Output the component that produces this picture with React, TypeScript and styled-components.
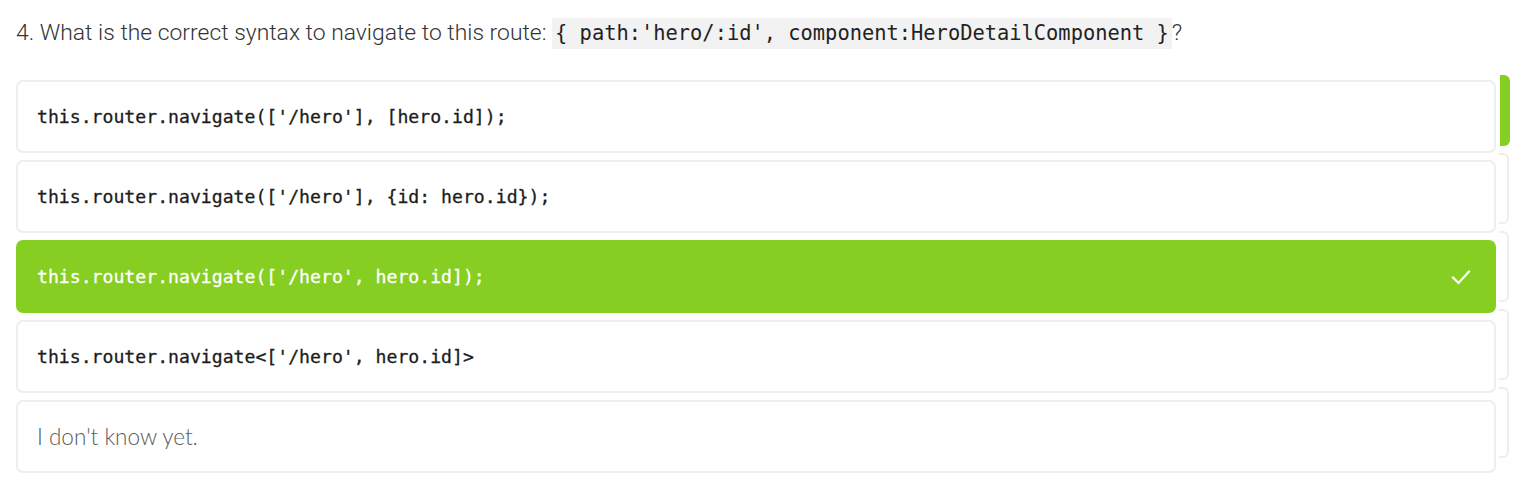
import React from "react";
import styled, { createGlobalStyle } from "styled-components";

const Global = createGlobalStyle`
  html, body { margin: 0; padding: 0; background: #ffffff; }
  body { font-family: Roboto, "Noto Sans", sans-serif; color: #2b2b2b; }
`;

const GREEN = "#86ce22";
const LINE = "#eeeeee";

const Page = styled.div`
  padding: 16px 0 0 16px;
  width: 1508px;
`;

const Question = styled.h2`
  margin: 0;
  font-family: Roboto, sans-serif;
  font-weight: 300;
  font-size: 22.9px;
  line-height: 34px;
  color: #333333;
  height: 34px;
`;

const InlineCode = styled.code`
  font-family: "DejaVu Sans Mono", monospace;
  font-size: 20.4px;
  font-weight: 400;
  background: #f2f2f2;
  color: #222;
  padding: 3px 3px 4px 3px;
`;

const Body = styled.div`
  display: flex;
  align-items: flex-start;
  gap: 4px;
  margin-top: 25px;
`;

const Options = styled.div`
  display: flex;
  flex-direction: column;
  gap: 7px;
  width: 1480px;
  padding-top: 5px;
`;

const Option = styled.div<{ $selected?: boolean }>`
  box-sizing: border-box;
  height: 73px;
  display: flex;
  align-items: center;
  justify-content: space-between;
  padding: 0 23px 0 19px;
  border: 2px solid ${(p) => (p.$selected ? GREEN : LINE)};
  background: ${(p) => (p.$selected ? GREEN : "#ffffff")};
  border-radius: 7px;
  color: ${(p) => (p.$selected ? "#ffffff" : "#1c1c1c")};
`;

const Code = styled.span`
  font-family: "DejaVu Sans Mono", monospace;
  font-size: 18.15px;
  font-weight: 400;
  -webkit-text-stroke: 0.3px currentColor;
`;

const Plain = styled.span`
  font-family: Lato, sans-serif;
  font-weight: 300;
  font-size: 22.5px;
  color: #5a5a5a;
`;

const Strip = styled.div`
  display: flex;
  flex-direction: column;
  gap: 7px;
  width: 10px;
`;

const Segment = styled.div<{ $active?: boolean }>`
  box-sizing: border-box;
  height: 71px;
  width: 10px;
  border-radius: 0 6px 6px 0;
  background: ${(p) => (p.$active ? GREEN : "transparent")};
  border: ${(p) => (p.$active ? "none" : `2px solid ${LINE}`)};
  border-left: none;
  margin-left: ${(p) => (p.$active ? "0" : "-1px")};
`;

const Check = () => (
  <svg width="20" height="16" viewBox="0 0 20 16" fill="none">
    <polyline
      points="2,8.5 7.5,14 18,2.5"
      stroke="#ffffff"
      strokeWidth="2.2"
      strokeLinecap="square"
      fill="none"
    />
  </svg>
);

const options: { text: string; code: boolean; selected?: boolean }[] = [
  { text: "this.router.navigate(['/hero'], [hero.id]);", code: true },
  { text: "this.router.navigate(['/hero'], {id: hero.id});", code: true },
  { text: "this.router.navigate(['/hero', hero.id]);", code: true, selected: true },
  { text: "this.router.navigate<['/hero', hero.id]>", code: true },
  { text: "I don't know yet.", code: false },
];

export default function App() {
  return (
    <>
      <Global />
      <Page>
        <Question>
          4. What is the correct syntax to navigate to this route:{" "}
          <InlineCode>{"{ path:'hero/:id', component:HeroDetailComponent }"}</InlineCode>?
        </Question>
        <Body>
          <Options>
            {options.map((o, i) => (
              <Option key={i} $selected={o.selected}>
                {o.code ? <Code>{o.text}</Code> : <Plain>{o.text}</Plain>}
                {o.selected && <Check />}
              </Option>
            ))}
          </Options>
          <Strip>
            <Segment $active />
            <Segment />
            <Segment />
            <Segment />
            <Segment />
          </Strip>
        </Body>
      </Page>
    </>
  );
}
